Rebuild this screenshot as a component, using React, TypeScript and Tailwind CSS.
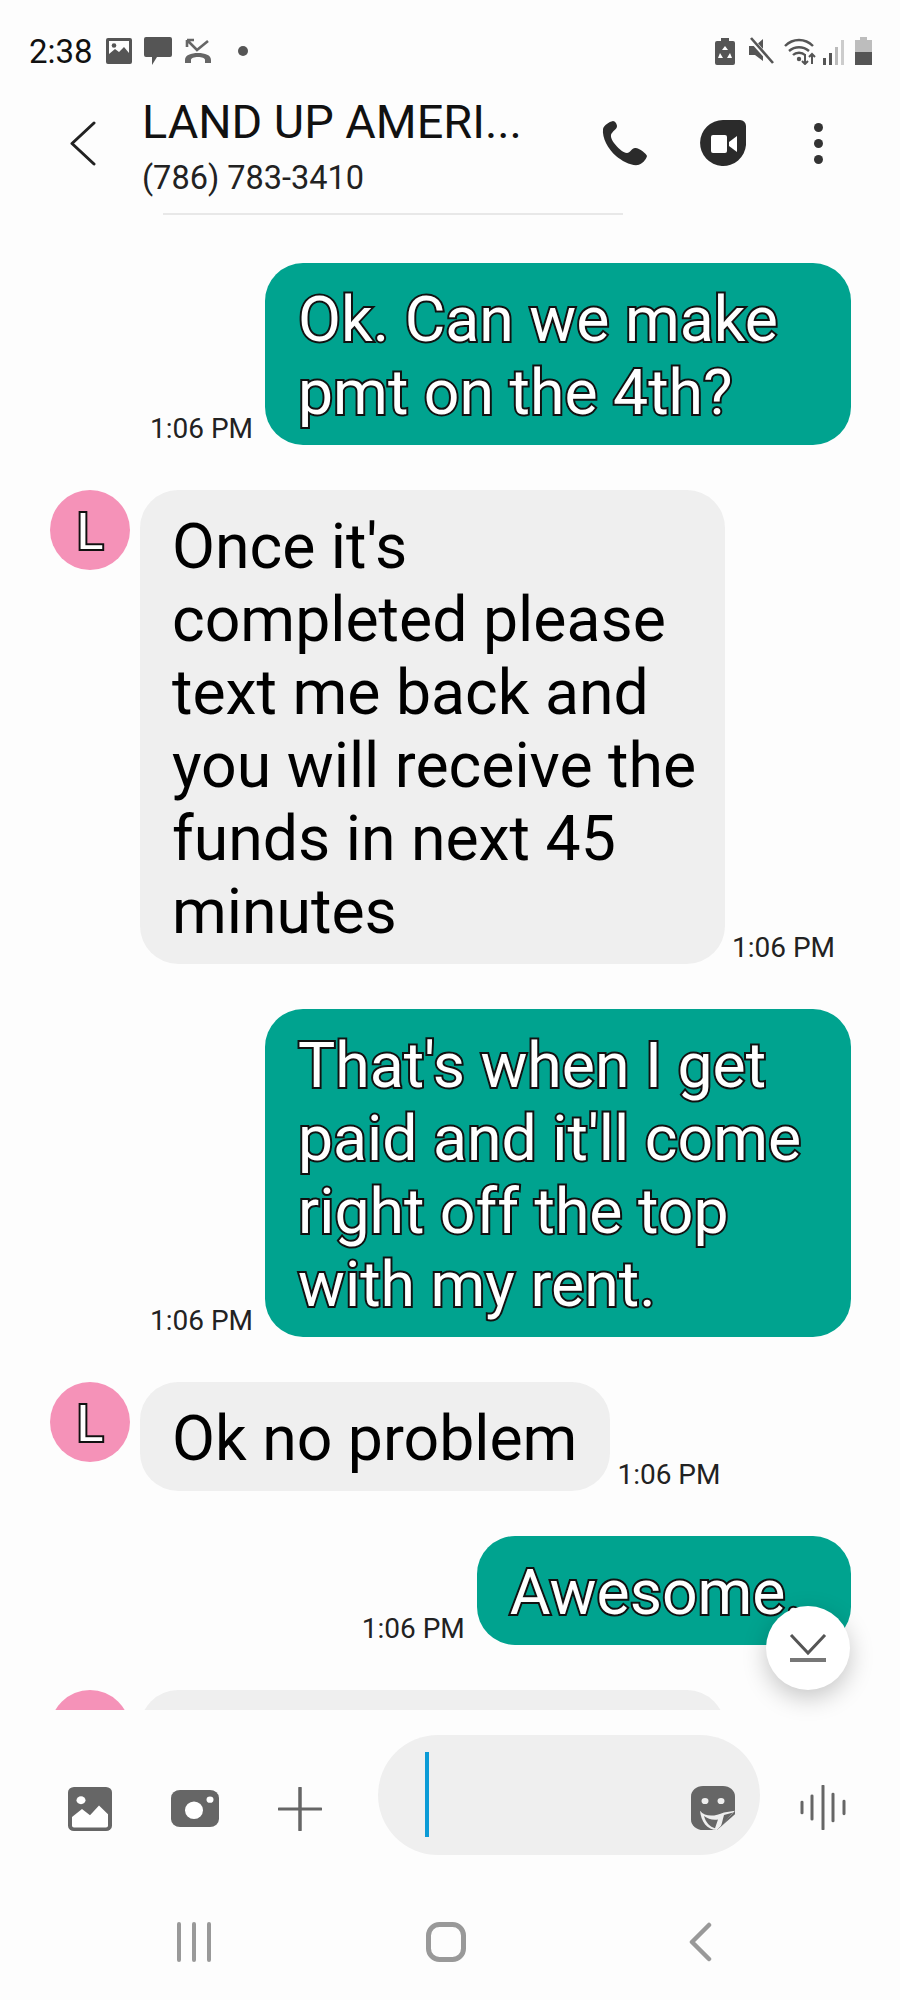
import { Fragment } from 'react';

const font = { fontFamily: 'Roboto, sans-serif' };

const messages = [
  { out: true, lines: ['Ok. Can we make', 'pmt on the 4th?'] },
  { out: false, lines: ["Once it's", 'completed please', 'text me back and', 'you will receive the', 'funds in next 45', 'minutes'] },
  { out: true, lines: ["That's when I get", "paid and it'll come", 'right off the top', 'with my rent.'] },
  { out: false, lines: ['Ok no problem'] },
  { out: true, lines: ['Awesome.'] },
];

function Lines({ lines }: { lines: string[] }) {
  return (
    <>
      {lines.map((l, i) => (
        <Fragment key={i}>
          {l}
          {i < lines.length - 1 && <br />}
        </Fragment>
      ))}
    </>
  );
}

function Time() {
  return <span className="text-[28px] leading-[30px] text-[#222] whitespace-nowrap mb-[1px]">1:06 PM</span>;
}

function Avatar() {
  return (
    <div className="w-[80px] h-[80px] rounded-full bg-[#f592b8] flex items-center justify-center shrink-0 pt-[4px] text-white text-[50px] leading-none [-webkit-text-stroke:4px_#111] [paint-order:stroke_fill]">
      L
    </div>
  );
}

function Message({ out, lines }: { out: boolean; lines: string[] }) {
  if (out) {
    return (
      <div className="flex justify-end items-end gap-[12px] pr-[49px]">
        <Time />
        <div className={`bg-[#00a38f] rounded-[38px] pl-[33px] pt-[20px] pb-[16px] text-white text-[62.500px] leading-[73px] whitespace-nowrap [-webkit-text-stroke:4px_#111] [paint-order:stroke_fill] ${lines.length > 1 ? 'w-[586px]' : 'pr-[49px]'}`}>
          <Lines lines={lines} />
        </div>
      </div>
    );
  }
  return (
    <div className="flex items-start pl-[50px]">
      <Avatar />
      <div className="flex items-end gap-[7px] ml-[10px]">
        <div className={`bg-[#efefef] rounded-[38px] pl-[32px] pr-[33px] pt-[20px] pb-[16px] text-black text-[62.500px] leading-[73px] whitespace-nowrap ${lines.length > 1 ? 'w-[585px]' : ''}`}>
          <Lines lines={lines} />
        </div>
        <Time />
      </div>
    </div>
  );
}

function StatusLeft() {
  return (
    <div className="flex items-center pl-[29px] gap-[12px]">
      <span className="text-[33px] leading-none text-[#111]">2:38</span>
      <svg width="26" height="26" viewBox="0 0 26 26" className="ml-[1px]">
        <path fillRule="evenodd" d="M2 0h22a2 2 0 0 1 2 2v22a2 2 0 0 1-2 2H2a2 2 0 0 1-2-2V2a2 2 0 0 1 2-2zM3 3v13l6-5 4 3 5-5 5 6V3z" fill="#555" />
        <circle cx="8" cy="7.5" r="2.3" fill="#555" />
      </svg>
      <svg width="28" height="28" viewBox="0 0 28 28">
        <path d="M2 0h24a2 2 0 0 1 2 2v16a2 2 0 0 1-2 2H13l-5 8v-8H2a2 2 0 0 1-2-2V2a2 2 0 0 1 2-2z" fill="#555" />
      </svg>
      <svg width="28" height="26" viewBox="0 0 28 26">
        <path d="M3 2v7M3 2h7M3 2l10 10L24 3" fill="none" stroke="#666" strokeWidth="2.6" />
        <path d="M1 25v-3c0-5 6-7 13-7s13 2 13 7v3h-6v-3c0-2-3-3-7-3s-7 1-7 3v3z" fill="#666" />
      </svg>
      <span className="w-[10px] h-[10px] rounded-full bg-[#555] ml-[14px]" />
    </div>
  );
}

function StatusRight() {
  return (
    <div className="flex items-center pr-[28px] gap-[8px]">
      <svg width="20" height="27" viewBox="0 0 20 27">
        <path d="M6 0h8v3h4a2 2 0 0 1 2 2v20a2 2 0 0 1-2 2H2a2 2 0 0 1-2-2V5a2 2 0 0 1 2-2h4z" fill="#555" />
        <path d="M10 8l3 4h-6zM5 15l3 5H3zM15 15l2 5h-5z" fill="#fff" />
      </svg>
      <svg width="26" height="28" viewBox="0 0 26 28" className="ml-[6px]">
        <path d="M0 9h6l8-7v22l-8-6H0z" fill="#555" />
        <path d="M1 1l23 26" stroke="#fdfdfd" strokeWidth="5" />
        <path d="M2 1l22 25" stroke="#555" strokeWidth="2.6" />
      </svg>
      <svg width="32" height="27" viewBox="0 0 32 27" className="ml-[1px]">
        <path d="M1 8c8-8 20-8 28 0M5 13c6-5 14-5 20 0M9 17c3-3 9-3 12 0" fill="none" stroke="#555" strokeWidth="2.4" />
        <circle cx="15" cy="21" r="2.2" fill="#555" />
        <path d="M21 16v10M18 23l3 3 3-3M28 26V16M25 19l3-3 3 3" fill="none" stroke="#555" strokeWidth="2" />
      </svg>
      <svg width="24" height="27" viewBox="0 0 24 27" className="-ml-[1px]">
        <rect x="0" y="20" width="3" height="7" fill="#555" />
        <rect x="6" y="15" width="3" height="12" fill="#555" />
        <rect x="12" y="9" width="3" height="18" fill="#bbb" />
        <rect x="18" y="2" width="3" height="25" fill="#ccc" />
      </svg>
      <svg width="17" height="28" viewBox="0 0 17 28">
        <path d="M5 0h7v3h5v12H0V3h5z" fill="#bdbdbd" />
        <rect x="0" y="15" width="17" height="13" fill="#555" />
      </svg>
    </div>
  );
}

export default function App() {
  return (
    <div className="relative w-[900px] h-[2000px] flex flex-col bg-[#fdfdfd] overflow-hidden" style={font}>
      <div className="h-[102px] flex items-center justify-between shrink-0">
        <StatusLeft />
        <StatusRight />
      </div>

      {/* Header */}
      <div className="h-[111px] flex shrink-0">
        <div className="w-[142px] flex items-start justify-end pr-[45px] pt-[19px]">
          <svg width="28" height="45" viewBox="0 0 28 45">
            <path d="M25 2L3 22.500l22 20.500" fill="none" stroke="#222" strokeWidth="3" strokeLinecap="round" strokeLinejoin="round" />
          </svg>
        </div>
        <div className="flex-1">
          <div className="text-[46.800px] leading-[44px] text-[#111] -mt-[2px]">LAND UP AMERI...</div>
          <div className="text-[32.500px] leading-[36px] text-[#222] mt-[16px]">(786) 783-3410</div>
        </div>
        <div className="flex items-start pt-[18px] pr-[77px]">
          <svg width="46" height="46" viewBox="0 0 46 46">
            <path d="M11 1c-4 1-9 4-10 8-1 9 5 20 13 27 6 5 15 10 22 9 4-1 8-5 9-9 0-2-9-9-12-8-3 0-5 5-8 5-4 0-10-6-13-10-3-4-4-8-2-10 2-3 5-4 5-7 0-2-2-5-4-5z" fill="#2b2b2b" />
          </svg>
          <svg width="46" height="48" viewBox="0 0 46 48" className="ml-[52px]">
            <path d="M23 0h17a6 6 0 0 1 6 6v19a23 23 0 1 1-23-25z" fill="#2b2b2b" />
            <rect x="11" y="15" width="16" height="18" rx="2" fill="#fff" />
            <path d="M29 22l8-6v16l-8-6z" fill="#fff" />
          </svg>
          <div className="flex flex-col gap-[7px] ml-[68px] pt-[3px]">
            <span className="w-[9px] h-[9px] rounded-full bg-[#333]" />
            <span className="w-[9px] h-[9px] rounded-full bg-[#333]" />
            <span className="w-[9px] h-[9px] rounded-full bg-[#333]" />
          </div>
        </div>
      </div>

      {/* Messages */}
      <div className="flex-1 overflow-hidden">
        <div className="h-[2px] w-[460px] ml-[163px] bg-[#e8e8e8]" />
        <div className="flex flex-col gap-[45px] pt-[48px]">
          {messages.map((m, i) => (
            <Message key={i} out={m.out} lines={m.lines} />
          ))}
          <div className="flex items-start pl-[50px]">
            <Avatar />
            <div className="w-[585px] h-[200px] ml-[10px] bg-[#efefef] rounded-[38px]" />
          </div>
        </div>
      </div>

      {/* Composer */}
      <div className="h-[170px] shrink-0 flex items-start">
        <div className="flex items-center w-[378px] h-[170px] pt-[27px]">
          <svg width="44" height="44" viewBox="0 0 44 50" preserveAspectRatio="none" className="ml-[68px]">
            <rect width="44" height="50" rx="6" fill="#666" />
            <circle cx="13" cy="15" r="4.5" fill="#fff" />
            <path d="M4 44V34l10-9 8 7 9-11 9 10v13a2 2 0 0 1-2 2H6a2 2 0 0 1-2-2z" fill="#fff" />
          </svg>
          <svg width="48" height="37" viewBox="0 0 48 42" preserveAspectRatio="none" className="ml-[59px]">
            <rect width="48" height="42" rx="9" fill="#666" />
            <ellipse cx="23" cy="23" rx="9" ry="10" fill="#fff" />
            <circle cx="39" cy="11" r="3.5" fill="#fff" />
          </svg>
          <svg width="44" height="44" viewBox="0 0 44 50" preserveAspectRatio="none" className="ml-[59px]">
            <path d="M22 1v48M1 25h42" stroke="#666" strokeWidth="3.5" strokeLinecap="round" />
          </svg>
        </div>
        <div className="relative w-[382px] h-[120px] mt-[25px] rounded-[60px] bg-[#efefef] shrink-0">
          <div className="absolute left-[47px] top-[17px] w-[4px] h-[85px] bg-[#0b9bd6]" />
          <svg width="44" height="44" viewBox="0 0 44 50" preserveAspectRatio="none" className="absolute right-[25px] top-[51px]">
            <path d="M12 0h20a12 12 0 0 1 12 12v20L26 50H12A12 12 0 0 1 0 38V12A12 12 0 0 1 12 0z" fill="#666" />
            <circle cx="14" cy="17" r="3.5" fill="#efefef" />
            <circle cx="30" cy="17" r="3.5" fill="#efefef" />
            <path d="M9 28c5 7 14 7 24 2l11-2-18 22c-10 0-16-10-17-22z" fill="#efefef" />
            <path d="M30 46l3-13 9-3z" fill="#666" />
            <path d="M13 34c2 8 6 12 11 14l3-10c-6 1-10-1-14-4z" fill="#666" />
          </svg>
        </div>
        <svg width="46" height="45" viewBox="0 0 46 50" preserveAspectRatio="none" className="ml-[40px] mt-[75px]">
          <path d="M2 19v12M12 12v26M23 1v48M33 10v30M44 18v14" stroke="#666" strokeWidth="3" strokeLinecap="round" />
        </svg>
      </div>

      {/* Nav bar */}
      <div className="h-[120px] shrink-0 flex items-start pt-[42px]">
        <svg width="36" height="40" viewBox="0 0 36 40" className="ml-[176px]">
          <path d="M3 2v36M18 2v36M33 2v36" stroke="#999" strokeWidth="4" strokeLinecap="round" />
        </svg>
        <svg width="40" height="40" viewBox="0 0 40 40" className="ml-[214px]">
          <rect x="2.500" y="2.500" width="35" height="35" rx="11" fill="none" stroke="#999" strokeWidth="5" />
        </svg>
        <svg width="24" height="40" viewBox="0 0 24 40" className="ml-[222px]">
          <path d="M21 3L4 20l17 17" fill="none" stroke="#999" strokeWidth="4.500" strokeLinecap="round" strokeLinejoin="round" />
        </svg>
      </div>

      {/* Scroll to bottom button */}
      <div className="absolute left-[766px] top-[1606px] w-[84px] h-[84px] rounded-full bg-white shadow-[0_8px_24px_rgba(0,0,0,0.22)] flex items-center justify-center">
        <svg width="38" height="28" viewBox="0 0 38 28">
          <path d="M2 1l17 18L36 1" fill="none" stroke="#555" strokeWidth="3" />
          <path d="M1 26h36" stroke="#777" strokeWidth="4" />
        </svg>
      </div>
    </div>
  );
}
